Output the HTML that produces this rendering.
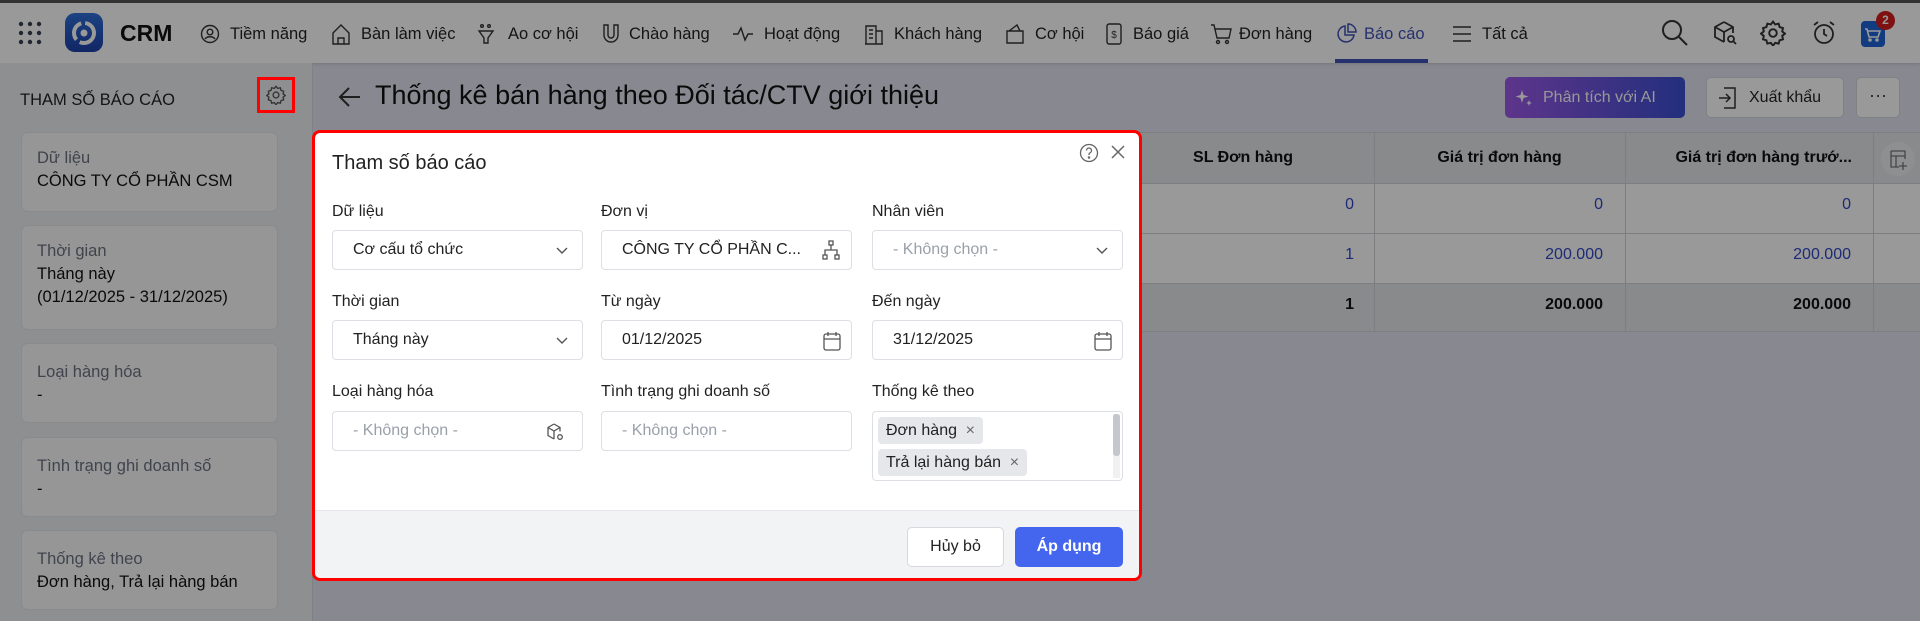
<!DOCTYPE html>
<html><head><meta charset="utf-8"><style>
*{box-sizing:border-box;margin:0;padding:0}
body{width:1920px;height:621px;overflow:hidden;position:relative;font-family:"Liberation Sans",sans-serif;background:#888990;color:#0a0a0a}
.a{position:absolute}
.nav{left:0;top:0;width:1920px;height:63px;background:#999999;border-top:3px solid #333;box-shadow:0 1px 3px rgba(0,0,0,.15)}
.ni{position:absolute;top:20px;font-size:16.5px;color:#141414;white-space:nowrap;line-height:22px}
.ic{position:absolute;top:20px}
.side{left:0;top:63px;width:313px;height:558px;background:#8e8f91;border-right:1px solid #808185}
.card{position:absolute;left:21px;width:257px;background:#969696;border:1px solid #898a8b;border-radius:6px;padding:14px 0 0 15px;font-size:16.5px;line-height:23px}
.card .l{color:#40444d}
.card .v{color:#0a0a0a}
.tbl{left:313px;top:132px;width:1607px}
.row{position:absolute;left:0;width:1607px;border-bottom:1px solid #7c7e82}
.cl{position:absolute;top:0;bottom:0;border-left:1px solid #7c7e82}
.num{position:absolute;font-size:16px;text-align:right;color:#1c2a77}
.modal{left:312px;top:130px;width:830px;height:451px;background:#fff;border:3px solid #f00;border-radius:8px;overflow:hidden}
.lb{position:absolute;font-size:16px;color:#222}
.in{position:absolute;width:251px;height:40px;border:1px solid #dcdfe4;border-radius:4px;font-size:16px;color:#222;padding:0 0 0 20px;line-height:38px;white-space:nowrap}
.ph{color:#9aa0aa}
.chev{position:absolute;right:14px;top:13px}
</style></head><body>
<!-- nav -->
<div class="a nav">
 <svg class="a" style="left:18px;top:18px" width="24" height="24" viewBox="0 0 24 24" fill="#212731"><circle cx="3" cy="3" r="2.2"/><circle cx="12" cy="3" r="2.2"/><circle cx="21" cy="3" r="2.2"/><circle cx="3" cy="12" r="2.2"/><circle cx="12" cy="12" r="2.2"/><circle cx="21" cy="12" r="2.2"/><circle cx="3" cy="21" r="2.2"/><circle cx="12" cy="21" r="2.2"/><circle cx="21" cy="21" r="2.2"/></svg>
 <div class="a" style="left:65px;top:10px;width:38px;height:39px;border-radius:10px;background:linear-gradient(#1c4382,#112665)"><svg width="38" height="39" viewBox="0 0 38 39"><circle cx="19" cy="20" r="10" fill="none" stroke="#999" stroke-width="4" stroke-dasharray="20 4"/><circle cx="19" cy="20" r="3.5" fill="#999"/></svg></div>
 <div class="a" style="left:120px;top:17px;font-size:23px;font-weight:bold;color:#0a0a0a">CRM</div>
 <svg class="ic" style="left:200px" width="20" height="22" viewBox="0 0 20 22" fill="none" stroke="#1f1f1f" stroke-width="1.4"><circle cx="10" cy="11" r="8.5"/><circle cx="10" cy="9" r="2.8"/><path d="M5 16c2-3 8-3 10 0"/></svg><div class="ni" style="left:230px">Tiềm năng</div>
 <svg class="ic" style="left:331px" width="20" height="22" viewBox="0 0 20 22" fill="none" stroke="#1f1f1f" stroke-width="1.4"><path d="M2 10L10 2l8 8v11H2z"/><path d="M7 21v-6h6v6"/></svg><div class="ni" style="left:361px">Bàn làm việc</div>
 <svg class="ic" style="left:477px" width="18" height="22" viewBox="0 0 18 22" fill="none" stroke="#1f1f1f" stroke-width="1.4"><path d="M2 8h14l-5 7v5H7v-5z"/><circle cx="5" cy="3" r="1.3"/><circle cx="12" cy="3" r="1.3"/></svg><div class="ni" style="left:508px">Ao cơ hội</div>
 <svg class="ic" style="left:602px" width="18" height="22" viewBox="0 0 18 22" fill="none" stroke="#1f1f1f" stroke-width="1.4"><path d="M2 2v10a7 7 0 0 0 14 0V2h-4v10a3 3 0 0 1-6 0V2z"/></svg><div class="ni" style="left:629px">Chào hàng</div>
 <svg class="ic" style="left:732px" width="22" height="22" viewBox="0 0 22 22" fill="none" stroke="#1f1f1f" stroke-width="1.4"><path d="M1 11h5l3-6 4 12 3-6h5"/></svg><div class="ni" style="left:764px">Hoạt động</div>
 <svg class="ic" style="left:864px" width="20" height="22" viewBox="0 0 20 22" fill="none" stroke="#1f1f1f" stroke-width="1.4"><path d="M2 21V3h10v18M12 8h6v13M1 21h18M5 7h4M5 11h4M5 15h4"/></svg><div class="ni" style="left:894px">Khách hàng</div>
 <svg class="ic" style="left:1005px" width="20" height="22" viewBox="0 0 20 22" fill="none" stroke="#1f1f1f" stroke-width="1.4"><path d="M2 8h16v12H2zM4 8l8-6 3 6"/></svg><div class="ni" style="left:1035px">Cơ hội</div>
 <svg class="ic" style="left:1106px" width="16" height="22" viewBox="0 0 16 22" fill="none" stroke="#1f1f1f" stroke-width="1.4"><rect x="1" y="1" width="14" height="20" rx="2"/><text x="8" y="15" font-size="10" text-anchor="middle" fill="#1f1f1f" stroke="none" font-family="Liberation Sans">$</text></svg><div class="ni" style="left:1133px">Báo giá</div>
 <svg class="ic" style="left:1210px" width="22" height="22" viewBox="0 0 22 22" fill="none" stroke="#1f1f1f" stroke-width="1.4"><path d="M1 2h3l3 13h12l2-9H5"/><circle cx="8" cy="19" r="1.5"/><circle cx="17" cy="19" r="1.5"/></svg><div class="ni" style="left:1239px">Đơn hàng</div>
 <svg class="ic" style="left:1335px" width="22" height="22" viewBox="0 0 22 22" fill="none" stroke="#26316d" stroke-width="1.5"><path d="M10 3a8 8 0 1 0 9 9h-9z"/><path d="M13 1v8h8a8 8 0 0 0-8-8z"/></svg><div class="ni" style="left:1364px;color:#26316d">Báo cáo</div>
 <div class="a" style="left:1335px;top:56px;width:93px;height:4px;background:#26316d"></div>
 <svg class="ic" style="left:1452px" width="20" height="22" viewBox="0 0 20 22" stroke="#1f1f1f" stroke-width="1.4"><path d="M1 4h18M1 11h18M1 18h18"/></svg><div class="ni" style="left:1482px">Tất cả</div>
 <svg class="a" style="left:1661px;top:16px" width="28" height="28" viewBox="0 0 28 28" fill="none" stroke="#1f1f1f" stroke-width="2"><circle cx="11" cy="11" r="9"/><path d="M18 18l8 8"/></svg>
 <svg class="a" style="left:1712px;top:17px" width="26" height="26" viewBox="0 0 26 26" fill="none" stroke="#1f1f1f" stroke-width="1.8"><path d="M12 2l9 5v6M12 2L3 7v10l9 5M3 7l9 5 9-5M12 12v10"/><circle cx="19" cy="19" r="3"/><path d="M21 21l3 3"/></svg>
 <svg class="a" style="left:1760px;top:17px" width="26" height="26" viewBox="0 0 24 24" fill="none" stroke="#1f1f1f" stroke-width="1.8"><circle cx="12" cy="12" r="3.5"/><path d="M12 1.5l2 2.6 3.2-.7.9 3.1 3.1.9-.7 3.2 2.6 2-2.6 2 .7 3.2-3.1.9-.9 3.1-3.2-.7-2 2.6-2-2.6-3.2.7-.9-3.1-3.1-.9.7-3.2-2.6-2 2.6-2-.7-3.2 3.1-.9.9-3.1 3.2.7z"/></svg>
 <svg class="a" style="left:1811px;top:17px" width="26" height="26" viewBox="0 0 26 26" fill="none" stroke="#1f1f1f" stroke-width="1.8"><circle cx="13" cy="14" r="9"/><path d="M13 9v5l3 2M3 5l4-3M23 5l-4-3"/></svg>
 <div class="a" style="left:1861px;top:18px;width:24px;height:26px;border-radius:4px;background:#123b80"><svg width="24" height="26" viewBox="0 0 24 26" fill="none" stroke="#999" stroke-width="1.6"><path d="M4 8h2l2 8h9l2-6H7"/><circle cx="9" cy="19" r="1"/><circle cx="16" cy="19" r="1"/></svg></div>
 <div class="a" style="left:1876px;top:8px;width:19px;height:19px;border-radius:50%;background:#801111;color:#999;font-size:12px;font-weight:bold;text-align:center;line-height:19px">2</div>
</div>
<!-- sidebar -->
<div class="a side">
 <div class="a" style="left:20px;top:28px;font-size:16.5px;color:#141414">THAM SỐ BÁO CÁO</div>
 <svg class="a" style="left:266px;top:22px" width="20" height="20" viewBox="0 0 24 24" fill="none" stroke="#333" stroke-width="1.6"><circle cx="12" cy="12" r="3.5"/><path d="M12 1.5l2 2.6 3.2-.7.9 3.1 3.1.9-.7 3.2 2.6 2-2.6 2 .7 3.2-3.1.9-.9 3.1-3.2-.7-2 2.6-2-2.6-3.2.7-.9-3.1-3.1-.9.7-3.2-2.6-2 2.6-2-.7-3.2 3.1-.9.9-3.1 3.2.7z"/></svg>
 <div class="card" style="top:69px;height:80px"><div class="l">Dữ liệu</div><div class="v">CÔNG TY CỔ PHẦN CSM</div></div>
 <div class="card" style="top:162px;height:105px"><div class="l">Thời gian</div><div class="v">Tháng này<br>(01/12/2025 - 31/12/2025)</div></div>
 <div class="card" style="top:280px;height:80px;padding-top:17px"><div class="l">Loại hàng hóa</div><div class="v">-</div></div>
 <div class="card" style="top:374px;height:80px;padding-top:17px"><div class="l">Tình trạng ghi doanh số</div><div class="v">-</div></div>
 <div class="card" style="top:467px;height:80px;padding-top:17px"><div class="l">Thống kê theo</div><div class="v">Đơn hàng, Trả lại hàng bán</div></div>
</div>
<!-- main header -->
<svg class="a" style="left:338px;top:86px" width="24" height="22" viewBox="0 0 24 22" fill="none" stroke="#1f1f1f" stroke-width="2"><path d="M22 11H3M11 2l-9 9 9 9"/></svg>
<div class="a" style="left:375px;top:80px;font-size:27px;color:#0a0a0a">Thống kê bán hàng theo Đối tác/CTV giới thiệu</div>
<div class="a" style="left:1505px;top:77px;width:180px;height:41px;border-radius:5px;background:linear-gradient(90deg,#5d358b,#232f7d);color:#999;font-size:16px;line-height:41px;padding-left:38px">Phân tích với AI</div>
<svg class="a" style="left:1515px;top:89px" width="18" height="18" viewBox="0 0 18 18" fill="#999"><path d="M7 1l1.5 5 5 1.5-5 1.5L7 14l-1.5-5L.5 7.5l5-1.5z"/><path d="M14 11l.8 2.2 2.2.8-2.2.8L14 17l-.8-2.2-2.2-.8 2.2-.8z"/></svg>
<div class="a" style="left:1706px;top:77px;width:138px;height:41px;border-radius:5px;background:#999;border:1px solid #808185;font-size:16px;line-height:39px;padding-left:42px;color:#141414">Xuất khẩu</div>
<svg class="a" style="left:1718px;top:87px" width="18" height="22" viewBox="0 0 18 22" fill="none" stroke="#1f1f1f" stroke-width="1.5"><path d="M6 1h11v20H6M1 11h11M8 7l4 4-4 4"/></svg>
<div class="a" style="left:1856px;top:77px;width:44px;height:41px;border-radius:5px;background:#999;border:1px solid #808185;text-align:center;font-size:18px;line-height:34px;color:#1f1f1f">···</div>
<!-- table -->
<div class="a tbl">
 <div class="row" style="top:0;height:52px;background:#898a8c;border-top:1px solid #7c7e82"></div>
 <div class="row" style="top:52px;height:50px;background:#999"></div>
 <div class="row" style="top:102px;height:50px;background:#999"></div>
 <div class="row" style="top:152px;height:48px;background:#898a8c"></div>
 <div class="cl" style="left:1061px;top:0;height:200px"></div>
 <div class="cl" style="left:1312px;top:0;height:200px"></div>
 <div class="cl" style="left:1560px;top:0;height:200px"></div>
 <div class="a" style="left:800px;top:17px;font-size:16px;font-weight:bold;width:260px;text-align:center">SL Đơn hàng</div>
 <div class="a" style="left:1061px;top:17px;font-size:16px;font-weight:bold;width:251px;text-align:center">Giá trị đơn hàng</div>
 <div class="a" style="left:1312px;top:17px;font-size:16px;font-weight:bold;width:227px;text-align:right">Giá trị đơn hàng trướ...</div>
 <div class="a" style="left:1568px;top:10px;width:34px;height:34px;border-radius:50%;background:#8e8f91"><svg width="34" height="34" viewBox="0 0 34 34" fill="none" stroke="#474747" stroke-width="1.3"><path d="M10 9h14v8M10 9v16h8M10 14h14M15 14v11M22 20v8M18 24h8"/></svg></div>
 <div class="num" style="left:900px;top:64px;width:141px">0</div>
 <div class="num" style="left:1100px;top:64px;width:190px">0</div>
 <div class="num" style="left:1350px;top:64px;width:188px">0</div>
 <div class="num" style="left:900px;top:114px;width:141px">1</div>
 <div class="num" style="left:1100px;top:114px;width:190px">200.000</div>
 <div class="num" style="left:1350px;top:114px;width:188px">200.000</div>
 <div class="num" style="left:900px;top:164px;width:141px;color:#0a0a0a;font-weight:bold">1</div>
 <div class="num" style="left:1100px;top:164px;width:190px;color:#0a0a0a;font-weight:bold">200.000</div>
 <div class="num" style="left:1350px;top:164px;width:188px;color:#0a0a0a;font-weight:bold">200.000</div>
</div>
<!-- red gear highlight -->
<div class="a" style="left:257px;top:77px;width:38px;height:36px;border:3px solid #f00"></div>
<!-- modal -->
<div class="a modal">
 <div class="a" style="left:17px;top:19px;font-size:20px;color:#222">Tham số báo cáo</div>
 <svg class="a" style="left:764px;top:10px" width="20" height="20" viewBox="0 0 20 20" fill="none" stroke="#666" stroke-width="1.3"><circle cx="10" cy="10" r="8.5"/><path d="M7.5 7.5a2.5 2.5 0 1 1 3.5 2.3c-.7.3-1 .8-1 1.5v.7"/><circle cx="10" cy="14.5" r=".6" fill="#666"/></svg>
 <svg class="a" style="left:796px;top:12px" width="14" height="14" viewBox="0 0 14 14" stroke="#666" stroke-width="1.5"><path d="M1 1l12 12M13 1L1 13"/></svg>

 <div class="lb" style="left:17px;top:70px">Dữ liệu</div>
 <div class="lb" style="left:286px;top:70px">Đơn vị</div>
 <div class="lb" style="left:557px;top:70px">Nhân viên</div>
 <div class="in" style="left:17px;top:97px">Cơ cấu tổ chức<svg class="chev" width="12" height="12" viewBox="0 0 12 12" fill="none" stroke="#555" stroke-width="1.4"><path d="M1 4l5 5 5-5"/></svg></div>
 <div class="in" style="left:286px;top:97px">CÔNG TY CỔ PHẦN C...<svg class="a" style="right:10px;top:9px" width="20" height="20" viewBox="0 0 20 20" fill="none" stroke="#555" stroke-width="1.3"><rect x="8" y="1" width="4" height="4"/><rect x="2" y="15" width="4" height="4"/><rect x="14" y="15" width="4" height="4"/><path d="M10 5v5M4 15v-5h12v5"/></svg></div>
 <div class="in ph" style="left:557px;top:97px">- Không chọn -<svg class="chev" width="12" height="12" viewBox="0 0 12 12" fill="none" stroke="#555" stroke-width="1.4"><path d="M1 4l5 5 5-5"/></svg></div>

 <div class="lb" style="left:17px;top:160px">Thời gian</div>
 <div class="lb" style="left:286px;top:160px">Từ ngày</div>
 <div class="lb" style="left:557px;top:160px">Đến ngày</div>
 <div class="in" style="left:17px;top:187px">Tháng này<svg class="chev" width="12" height="12" viewBox="0 0 12 12" fill="none" stroke="#555" stroke-width="1.4"><path d="M1 4l5 5 5-5"/></svg></div>
 <div class="in" style="left:286px;top:187px">01/12/2025<svg class="a" style="right:10px;top:10px" width="18" height="20" viewBox="0 0 18 20" fill="none" stroke="#555" stroke-width="1.3"><rect x="1" y="3" width="16" height="16" rx="2"/><path d="M1 8h16M5 1v4M13 1v4"/></svg></div>
 <div class="in" style="left:557px;top:187px">31/12/2025<svg class="a" style="right:10px;top:10px" width="18" height="20" viewBox="0 0 18 20" fill="none" stroke="#555" stroke-width="1.3"><rect x="1" y="3" width="16" height="16" rx="2"/><path d="M1 8h16M5 1v4M13 1v4"/></svg></div>

 <div class="lb" style="left:17px;top:250px">Loại hàng hóa</div>
 <div class="lb" style="left:286px;top:250px">Tình trạng ghi doanh số</div>
 <div class="lb" style="left:557px;top:250px">Thống kê theo</div>
 <div class="in ph" style="left:17px;top:278px">- Không chọn -<svg class="a" style="right:18px;top:11px" width="18" height="18" viewBox="0 0 18 18" fill="none" stroke="#555" stroke-width="1.3"><path d="M8 1l6 3.5v4M8 1L2 4.5v8L8 16M2 4.5L8 8l6-3.5M8 8v8"/><circle cx="14" cy="14" r="2.3"/></svg></div>
 <div class="in ph" style="left:286px;top:278px">- Không chọn -</div>
 <div class="a" style="left:557px;top:278px;width:251px;height:70px;border:1px solid #dcdfe4;border-radius:4px">
  <div class="a" style="left:5px;top:5px;height:27px;padding:0 26px 0 8px;background:#e5e7eb;border-radius:4px;font-size:16px;line-height:27px;color:#222">Đơn hàng<span style="position:absolute;right:8px;color:#666">×</span></div>
  <div class="a" style="left:5px;top:37px;height:27px;padding:0 26px 0 8px;background:#e5e7eb;border-radius:4px;font-size:16px;line-height:27px;color:#222;white-space:nowrap">Trả lại hàng bán<span style="position:absolute;right:8px;color:#666">×</span></div>
  <div class="a" style="right:2px;top:2px;width:7px;height:64px;background:#f1f1f1"><div style="height:42px;background:#c4c7cc;border-radius:3px"></div></div>
 </div>

 <div class="a" style="left:0;top:377px;width:830px;height:74px;background:#f2f3f5;border-top:1px solid #e5e7eb"></div>
 <div class="a" style="left:592px;top:394px;width:97px;height:40px;background:#fff;border:1px solid #d6d8dd;border-radius:5px;font-size:16px;text-align:center;line-height:38px;color:#222">Hủy bỏ</div>
 <div class="a" style="left:700px;top:394px;width:108px;height:40px;background:#4466ee;border-radius:5px;font-size:16px;text-align:center;line-height:40px;color:#fff;font-weight:bold">Áp dụng</div>
</div>
</body></html>
